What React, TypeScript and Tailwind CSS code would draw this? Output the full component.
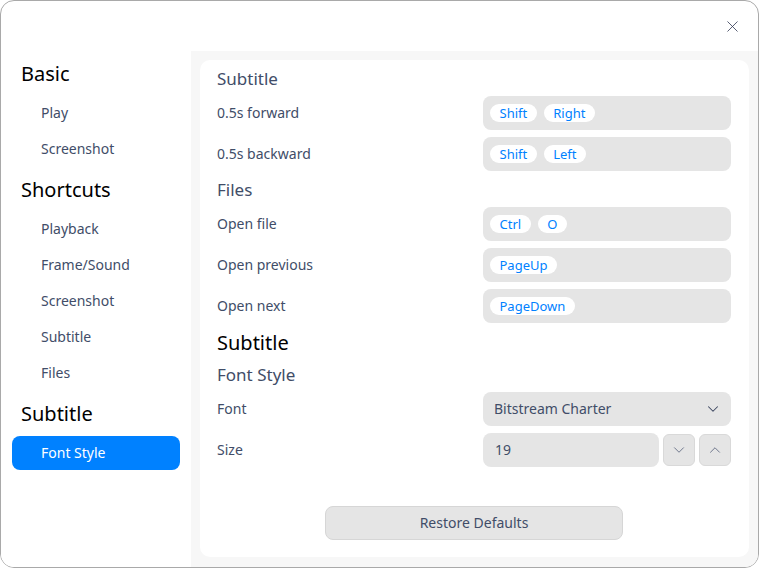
import { ChevronDown, ChevronUp, X } from "lucide-react";

const sidebar = [
  { title: "Basic", items: ["Play", "Screenshot"] },
  { title: "Shortcuts", items: ["Playback", "Frame/Sound", "Screenshot", "Subtitle", "Files"] },
  { title: "Subtitle", items: ["Font Style"] },
];

const Keys = ({ keys }: { keys: string[] }) => (
  <div className="w-[248px] h-[34px] rounded-[8px] bg-[#e5e5e5] flex items-center gap-[7px] pl-[7px]">
    {keys.map((k) => (
      <span key={k} className="h-[18px] px-[9.5px] rounded-full bg-white text-[13px] leading-[18px] text-[#0081ff]">
        {k}
      </span>
    ))}
  </div>
);

const Row = ({ label, children }: { label: string; children: React.ReactNode }) => (
  <div className="flex items-center h-[34px]">
    <span className="flex-1 pb-[2px] text-[14px] text-[#414d68]">{label}</span>
    {children}
  </div>
);

const SubHead = ({ children }: { children: React.ReactNode }) => (
  <div className="h-[22px] pt-[2px] flex items-center text-[17px] text-[#414d68]">{children}</div>
);

export default function App() {
  return (
    <div className="w-[759px] h-[568px] bg-white" style={{ fontFamily: '"Noto Sans", sans-serif' }}>
      <div className="w-full h-full rounded-[14px] border border-[#a9a9a9] bg-white overflow-hidden flex flex-col">
        {/* Title bar */}
        <div className="h-[50px] shrink-0 flex justify-end items-start">
          <button className="w-[50px] h-[50px] flex items-center justify-center text-[#2c3450] mr-[1px]">
            <X size={19} strokeWidth={1} />
          </button>
        </div>

        <div className="flex flex-1 min-h-0">
          {/* Sidebar */}
          <nav className="w-[190px] shrink-0 bg-white">
            {sidebar.map((group) => (
              <div key={group.title}>
                <div className="h-[44px] pt-[2px] pl-[20px] flex items-center text-[20px] text-black">
                  {group.title}
                </div>
                {group.items.map((item) => {
                  const active = group.title === "Subtitle" && item === "Font Style";
                  return (
                    <div key={group.title + item} className="h-[36px] py-px px-[11px]">
                      <div
                        className={
                          active
                            ? "h-[34px] pb-[2px] rounded-[8px] bg-[#0081ff] text-white pl-[29px] flex items-center text-[14px]"
                            : "h-[34px] pb-[2px] pl-[29px] flex items-center text-[14px] text-[#414d68]"
                        }
                      >
                        {item}
                      </div>
                    </div>
                  );
                })}
              </div>
            ))}
          </nav>

          {/* Content */}
          <main className="flex-1 bg-[#f7f7f7] pt-[9px] pl-[9px] pr-[9px] pb-[10px]">
            <div className="h-full rounded-[10px] bg-white pl-[17px] pr-[18px] pt-[7px] pb-[17px] flex flex-col">
              <div className="flex flex-col gap-[7px]">
                <SubHead>Subtitle</SubHead>
                <Row label="0.5s forward">
                  <Keys keys={["Shift", "Right"]} />
                </Row>
                <Row label="0.5s backward">
                  <Keys keys={["Shift", "Left"]} />
                </Row>
                <SubHead>Files</SubHead>
                <Row label="Open file">
                  <Keys keys={["Ctrl", "O"]} />
                </Row>
                <Row label="Open previous">
                  <Keys keys={["PageUp"]} />
                </Row>
                <Row label="Open next">
                  <Keys keys={["PageDown"]} />
                </Row>
                <div className="h-[26px] flex items-center text-[20px] text-black">Subtitle</div>
                <SubHead>Font Style</SubHead>
                <Row label="Font">
                  <div className="w-[248px] h-[34px] pb-[2px] rounded-[8px] bg-[#e5e5e5] flex items-center justify-between pl-[11px] pr-[9px] text-[14px] text-[#414d68]">
                    <span>Bitstream Charter</span>
                    <ChevronDown size={18} strokeWidth={1.4} className="text-[#3c4660] mt-[2px]" />
                  </div>
                </Row>
                <Row label="Size">
                  <div className="w-[248px] h-[34px] flex items-center gap-[4px]">
                    <div className="w-[176px] h-[34px] pb-[2px] rounded-[8px] bg-[#e5e5e5] flex items-center pl-[12px] text-[14px] text-[#414d68]">
                      19
                    </div>
                    <button className="w-[32px] h-[32px] rounded-[6px] bg-[#e5e5e5] border border-[#d9d9d9] flex items-center justify-center text-[#4a5470]">
                      <ChevronDown size={18} strokeWidth={1} />
                    </button>
                    <button className="w-[32px] h-[32px] rounded-[6px] bg-[#e5e5e5] border border-[#d9d9d9] flex items-center justify-center text-[#4a5470]">
                      <ChevronUp size={18} strokeWidth={1} />
                    </button>
                  </div>
                </Row>
              </div>
              <div className="flex-1" />
              <div className="flex justify-center">
                <button className="w-[298px] h-[34px] pb-[2px] rounded-[8px] bg-[#e5e5e5] border border-[#d6d6d6] text-[14px] text-[#414d68]">
                  Restore Defaults
                </button>
              </div>
            </div>
          </main>
        </div>
      </div>
    </div>
  );
}
